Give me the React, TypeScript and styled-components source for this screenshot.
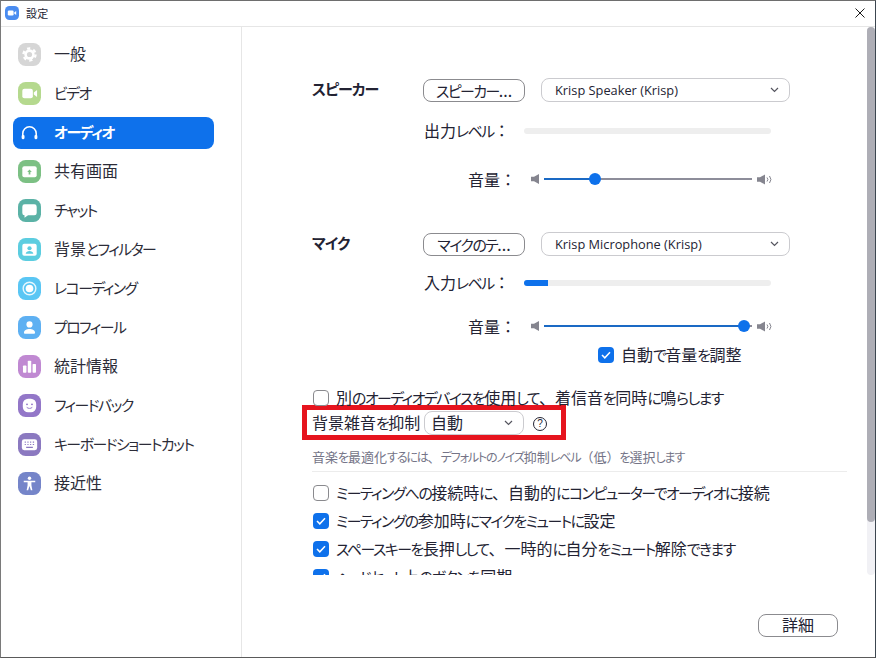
import React from "react";
import styled, { createGlobalStyle } from "styled-components";

const Global = createGlobalStyle`
  html, body { margin: 0; padding: 0; background: #fff; }
  * { box-sizing: border-box; }
  body {
    font-family: "Noto Sans CJK JP", "Noto Sans", sans-serif;
    color: #232333;
  }
`;

const Kana = styled.span`
  font-size: 0.93em;
  letter-spacing: -0.1em;
  font-feature-settings: "palt";
`;

const Jp = ({ children }: { children: string }) => (
  <>
    {children.split(/([\u3040-\u30FF]+)/).map((part, i) =>
      i % 2 === 1 ? <Kana key={i}>{part}</Kana> : part
    )}
  </>
);

const Window = styled.div`
  width: 876px;
  height: 658px;
  display: flex;
  flex-direction: column;
  background: #fff;
  border-top: 1px solid #6e6e6e;
  border-left: 1px solid #7a7a7a;
  border-right: 1px solid #3c4650;
  border-bottom: 1px solid #5a5a5a;
  overflow: hidden;
`;

const TitleBar = styled.div`
  height: 26px;
  flex: none;
  display: flex;
  align-items: center;
  padding: 0 10px 2px 4px;
  border-bottom: 1px solid #e6e6e6;
`;

const TitleText = styled.span`
  font-size: 11px;
  margin-left: 7px;
  flex: 1;
  letter-spacing: 0.3px;
`;

const Body = styled.div`
  flex: 1;
  display: flex;
  min-height: 0;
`;

const Sidebar = styled.nav`
  width: 241px;
  flex: none;
  border-right: 1px solid #e6e6e6;
  padding: 12px 0 0 12px;
  display: flex;
  flex-direction: column;
  gap: 7px;
`;

const NavItem = styled.div<{ $active?: boolean }>`
  width: 201px;
  height: 32px;
  border-radius: 8px;
  display: flex;
  align-items: center;
  gap: 13px;
  padding-left: 5px;
  background: ${(p) => (p.$active ? "#0e71eb" : "transparent")};
  color: ${(p) => (p.$active ? "#fff" : "#2c2c38")};
  font-size: 16px;
  font-weight: ${(p) => (p.$active ? 700 : 400)};
  white-space: nowrap;
`;

const NavLabel = styled.span`
  padding-bottom: 5px;
`;

const NavIcon = styled.svg`
  flex: none;
  margin-top: -1px;
`;

const Main = styled.main`
  flex: 1;
  display: flex;
  flex-direction: column;
  min-width: 0;
`;

const MainTop = styled.div`
  height: 548px;
  flex: none;
  display: flex;
`;

const ScrollArea = styled.div`
  flex: 1;
  overflow: hidden;
  padding: 51px 0 0 70px;
  font-size: 16px;
`;

const ScrollTrack = styled.div`
  width: 8px;
  flex: none;
  background: #f1f1f5;
  border-radius: 4px;
`;

const ScrollThumb = styled.div`
  height: 495px;
  background: #aeaeb6;
  border-radius: 4px;
`;

const Footer = styled.div`
  flex: 1;
  display: flex;
  justify-content: flex-end;
  align-items: flex-start;
  padding: 39px 37px 0 0;
`;

const DeviceRow = styled.div<{ $top: number }>`
  display: flex;
  align-items: center;
  height: 24px;
  margin-top: ${(p) => p.$top}px;
`;

const SectionLabel = styled.span`
  width: 111px;
  font-size: 15px;
  font-weight: 700;
  letter-spacing: -1px;
  font-feature-settings: "palt";
  padding-bottom: 3px;
`;

const TestButton = styled.button`
  width: 102px;
  height: 23px;
  margin-right: 16px;
  border: 1px solid #8b8b8f;
  border-radius: 8px;
  background: #fff;
  color: inherit;
  font: inherit;
  font-size: 16px;
  line-height: 20px;
  padding: 0;
`;

const SelectBox = styled.div<{ $w: number; $h: number; $inset: number }>`
  width: ${(p) => p.$w}px;
  height: ${(p) => p.$h}px;
  display: flex;
  align-items: center;
  justify-content: space-between;
  padding: 0 10px 0 ${(p) => p.$inset}px;
  border: 1px solid #cbcbcf;
  border-radius: 8px;
  background: #fff;
`;

const SelectValue = styled.span`
  font-family: "Open Sans", "Noto Sans", sans-serif;
  font-size: 12.8px;
`;

const NoiseValue = styled.span`
  font-size: 16px;
  padding-bottom: 2px;
`;

const LevelRow = styled.div<{ $top: number }>`
  display: flex;
  align-items: center;
  height: 24px;
  margin-top: ${(p) => p.$top}px;
  padding-left: 112px;
`;

const LevelLabel = styled.span`
  width: 100px;
  font-size: 16px;
  padding-bottom: 3px;
`;

const LevelTrack = styled.div`
  width: 247px;
  height: 6px;
  border-radius: 3px;
  background: #eeeeee;
  overflow: hidden;
`;

const LevelFill = styled.div<{ $w: number }>`
  width: ${(p) => p.$w}px;
  height: 100%;
  background: #0e71eb;
`;

const VolumeRow = styled.div<{ $top: number }>`
  display: flex;
  align-items: center;
  height: 24px;
  margin-top: ${(p) => p.$top}px;
  padding-left: 156px;
`;

const VolumeLabel = styled.span`
  width: 63px;
  font-size: 16px;
  margin-top: 1px;
  padding-bottom: 1px;
`;

const SliderTrack = styled.div<{ $rest: string }>`
  position: relative;
  width: 208px;
  height: 2px;
  margin: 0 5px 0 5px;
  background: ${(p) => p.$rest};
`;

const SliderFill = styled.div<{ $pct: number }>`
  height: 100%;
  width: ${(p) => p.$pct}%;
  background: #1a69c4;
`;

const SliderThumb = styled.div<{ $pct: number }>`
  position: absolute;
  top: -5px;
  left: ${(p) => p.$pct}%;
  width: 12px;
  height: 12px;
  margin-left: -6px;
  border-radius: 50%;
  background: #0e71eb;
`;

const CheckRow = styled.div<{ $top: number; $left?: number }>`
  display: flex;
  align-items: center;
  gap: 7px;
  height: 16px;
  margin-top: ${(p) => p.$top}px;
  padding-left: ${(p) => p.$left ?? 1}px;
  font-size: 16px;
  line-height: 16px;
  white-space: nowrap;
`;

const CheckText = styled.span`
  padding-bottom: 1px;
`;

const CheckBox = styled.span<{ $on?: boolean }>`
  width: 16px;
  height: 16px;
  flex: none;
  display: inline-flex;
  align-items: center;
  justify-content: center;
  border-radius: 4px;
  background: ${(p) => (p.$on ? "#0e71eb" : "#fff")};
  border: ${(p) => (p.$on ? "none" : "1px solid #8a8a8e")};
`;

const NoiseRow = styled.div`
  width: 264px;
  height: 35px;
  margin: -1px 0 0 -10px;
  padding-left: 5px;
  border: 5px solid #e6141e;
  display: flex;
  align-items: center;
  font-size: 16px;
  white-space: nowrap;
`;

const NoiseLabel = styled.span`
  width: 112px;
  flex: none;
  padding-bottom: 2px;
`;

const HelpMark = styled.span`
  width: 14px;
  height: 14px;
  margin: 2px 0 0 9px;
  flex: none;
  display: inline-flex;
  align-items: center;
  justify-content: center;
  border: 1.4px solid #232333;
  border-radius: 50%;
  font-family: "Liberation Sans", sans-serif;
  font-size: 10px;
  line-height: 1;
`;

const Hint = styled.div`
  margin-top: 9px;
  height: 16px;
  font-size: 13px;
  line-height: 16px;
  color: #747487;
  white-space: nowrap;
`;

const Divider = styled.hr`
  width: 535px;
  height: 1px;
  margin: 6px 0 0 0;
  border: none;
  background: #ececec;
`;

const DetailButton = styled.button`
  width: 80px;
  height: 23px;
  border: 1px solid #8b8b8f;
  border-radius: 8px;
  background: #fff;
  color: inherit;
  font: inherit;
  font-size: 16px;
  line-height: 18px;
  padding: 0 0 4px;
`;

const Squircle = ({ color, children }: { color: string; children: React.ReactNode }) => (
  <NavIcon width="23" height="23" viewBox="0 0 24 24">
    <rect width="24" height="24" rx="8" fill={color} />
    {children}
  </NavIcon>
);

type Item = { label: string; color?: string; icon: (c: string) => React.ReactNode; active?: boolean };

const items: Item[] = [
  {
    label: "一般",
    color: "#d6d6d6",
    icon: (c) => (
      <>
        <circle cx="12" cy="12" r="5.4" fill="#fff" />
        <circle cx="12" cy="12" r="6.3" fill="none" stroke="#fff" strokeWidth="2.4" strokeDasharray="3.3 3.3" />
        <circle cx="12" cy="12" r="2.7" fill={c} />
      </>
    ),
  },
  {
    label: "ビデオ",
    color: "#b5d98e",
    icon: () => (
      <>
        <rect x="4.5" y="7" width="11" height="10" rx="2.2" fill="#fff" />
        <path d="M16.5 11l3.4-2.6v7.2L16.5 13z" fill="#fff" />
      </>
    ),
  },
  { label: "オーディオ", active: true, icon: () => null },
  {
    label: "共有画面",
    color: "#7cc084",
    icon: (c) => (
      <>
        <rect x="4.5" y="6.5" width="15" height="11.5" rx="2" fill="#fff" />
        <path d="M12 9.8l2.4 2.6h-1.5v2.6h-1.8v-2.6H9.6z" fill={c} />
      </>
    ),
  },
  {
    label: "チャット",
    color: "#5bb2a6",
    icon: () => <path d="M7 5.5h10a2.5 2.5 0 0 1 2.5 2.5v6.5a2.5 2.5 0 0 1-2.5 2.5h-6.5l-3.7 2.6V17A2.5 2.5 0 0 1 4.5 14.5V8A2.5 2.5 0 0 1 7 5.5z" fill="#fff" />,
  },
  {
    label: "背景とフィルター",
    color: "#5ccde0",
    icon: (c) => (
      <>
        <rect x="4.5" y="6" width="15" height="12.5" rx="2" fill="#fff" />
        <circle cx="12" cy="10.7" r="2.2" fill={c} />
        <path d="M8 16.5c.3-2 2-3 4-3s3.7 1 4 3z" fill={c} />
      </>
    ),
  },
  {
    label: "レコーディング",
    color: "#5ac6f4",
    icon: () => (
      <>
        <circle cx="12" cy="12" r="6.6" fill="none" stroke="#fff" strokeWidth="1.5" opacity="0.85" />
        <circle cx="12" cy="12" r="4" fill="#fff" />
      </>
    ),
  },
  {
    label: "プロフィール",
    color: "#5eb0f2",
    icon: () => (
      <>
        <circle cx="12" cy="8.8" r="3.2" fill="#fff" />
        <path d="M6.2 17.6c0-2.8 2.8-4 5.8-4s5.8 1.2 5.8 4c0 .6-.4 1-1 1H7.2c-.6 0-1-.4-1-1z" fill="#fff" />
      </>
    ),
  },
  {
    label: "統計情報",
    color: "#c089d2",
    icon: () => (
      <>
        <rect x="5.2" y="11" width="3.6" height="7.5" rx="0.8" fill="#fff" />
        <rect x="10.2" y="6" width="3.6" height="12.5" rx="0.8" fill="#fff" />
        <rect x="15.2" y="9.5" width="3.6" height="9" rx="0.8" fill="#fff" />
      </>
    ),
  },
  {
    label: "フィードバック",
    color: "#9377c8",
    icon: (c) => (
      <>
        <rect x="5" y="5" width="14" height="14" rx="5.5" fill="#fff" />
        <circle cx="9.4" cy="10.8" r="1" fill={c} />
        <circle cx="14.6" cy="10.8" r="1" fill={c} />
        <path d="M9.4 14.2c1.4 1.2 3.8 1.2 5.2 0" fill="none" stroke={c} strokeWidth="1" strokeLinecap="round" />
      </>
    ),
  },
  {
    label: "キーボードショートカット",
    color: "#8b79c0",
    icon: (c) => (
      <>
        <rect x="4" y="6.5" width="16" height="11.5" rx="2.5" fill="#fff" />
        <path d="M7 9.5h1.2M9.8 9.5H11M12.6 9.5h1.2M15.4 9.5h1.4M7 12h1.2M9.8 12H11M12.6 12h1.2M15.4 12h1.4M8.5 15h7" stroke={c} strokeWidth="1.2" />
      </>
    ),
  },
  {
    label: "接近性",
    color: "#7585c9",
    icon: () => (
      <>
        <circle cx="12" cy="6.6" r="1.8" fill="#fff" />
        <path d="M6 9.2h12v1.5h-4v3l1 5.3h-1.6L12 14.6 10.6 19H9l1-5.3v-3H6z" fill="#fff" />
      </>
    ),
  },
];

const Headphones = () => (
  <NavIcon width="23" height="23" viewBox="0 0 24 24">
    <path d="M5 18v-5a7 7 0 0 1 14 0v5" fill="none" stroke="#fff" strokeWidth="1.6" />
    <rect x="3.8" y="14.5" width="3" height="4.5" rx="1.2" fill="#fff" />
    <rect x="17.2" y="14.5" width="3" height="4.5" rx="1.2" fill="#fff" />
  </NavIcon>
);

const Logo = () => (
  <svg width="14" height="14" viewBox="0 0 14 14" style={{ flex: "none" }}>
    <rect width="14" height="14" rx="4.5" fill="#4a8cf0" />
    <rect x="2.8" y="4.5" width="5.8" height="5" rx="1.2" fill="#fff" />
    <path d="M9.2 6.5l2-1.400v3.800l-2-1.400z" fill="#fff" />
  </svg>
);

const CloseIcon = () => (
  <svg width="10" height="10" viewBox="0 0 10 10" style={{ flex: "none" }}>
    <path d="M.5.5l9 9M9.5.5l-9 9" stroke="#1a1a1a" strokeWidth="1" />
  </svg>
);

const Chevron = () => (
  <svg width="9" height="6" viewBox="0 0 9 6" style={{ flex: "none" }}>
    <path d="M1 1l3.5 3.5L8 1" fill="none" stroke="#55555f" strokeWidth="1.2" />
  </svg>
);

const Tick = () => (
  <svg width="10" height="8" viewBox="0 0 10 8">
    <path d="M1 4l2.8 2.8L9 1.2" fill="none" stroke="#fff" strokeWidth="1.5" />
  </svg>
);

const SpeakerLow = () => (
  <svg width="8" height="10" viewBox="0 0 8 10" style={{ flex: "none" }}>
    <path d="M0 2.8h3L8 0v10L3 7.2H0z" fill="#85858f" />
  </svg>
);

const SpeakerHigh = () => (
  <svg width="15" height="11" viewBox="0 0 15 11" style={{ flex: "none" }}>
    <path d="M0 3.3h3L8 .5v10L3 7.7H0z" fill="#85858f" />
    <path d="M10 3.5a3 3 0 0 1 0 4M12.5 2a5.500 5.500 0 0 1 0 7" fill="none" stroke="#85858f" strokeWidth="1" />
  </svg>
);

const Volume = ({ top, pct, rest }: { top: number; pct: number; rest: string }) => (
  <VolumeRow $top={top}>
    <VolumeLabel>音量：</VolumeLabel>
    <SpeakerLow />
    <SliderTrack $rest={rest}>
      <SliderFill $pct={pct} />
      <SliderThumb $pct={pct} />
    </SliderTrack>
    <SpeakerHigh />
  </VolumeRow>
);

export default function App() {
  return (
    <>
      <Global />
      <Window>
        <TitleBar>
          <Logo />
          <TitleText>設定</TitleText>
          <CloseIcon />
        </TitleBar>
        <Body>
          <Sidebar>
            {items.map((it) => (
              <NavItem key={it.label} $active={it.active}>
                {it.active ? <Headphones /> : <Squircle color={it.color!}>{it.icon(it.color!)}</Squircle>}
                <NavLabel>
                  <Jp>{it.label}</Jp>
                </NavLabel>
              </NavItem>
            ))}
          </Sidebar>
          <Main>
            <MainTop>
              <ScrollArea>
                <DeviceRow $top={0}>
                  <SectionLabel>スピーカー</SectionLabel>
                  <TestButton>
                    <Jp>スピーカー...</Jp>
                  </TestButton>
                  <SelectBox $w={249} $h={24} $inset={13}>
                    <SelectValue>Krisp Speaker (Krisp)</SelectValue>
                    <Chevron />
                  </SelectBox>
                </DeviceRow>
                <LevelRow $top={17}>
                  <LevelLabel>
                    <Jp>出力レベル：</Jp>
                  </LevelLabel>
                  <LevelTrack />
                </LevelRow>
                <Volume top={24} pct={24.5} rest="#8d8d9a" />
                <DeviceRow $top={41}>
                  <SectionLabel>マイク</SectionLabel>
                  <TestButton>
                    <Jp>マイクのテ...</Jp>
                  </TestButton>
                  <SelectBox $w={249} $h={24} $inset={13}>
                    <SelectValue>Krisp Microphone (Krisp)</SelectValue>
                    <Chevron />
                  </SelectBox>
                </DeviceRow>
                <LevelRow $top={15}>
                  <LevelLabel>
                    <Jp>入力レベル：</Jp>
                  </LevelLabel>
                  <LevelTrack>
                    <LevelFill $w={24} />
                  </LevelTrack>
                </LevelRow>
                <Volume top={19} pct={96.2} rest="#8d8d9a" />
                <CheckRow $top={9} $left={286}>
                  <CheckBox $on>
                    <Tick />
                  </CheckBox>
                  <CheckText>
                    <Jp>自動で音量を調整</Jp>
                  </CheckText>
                </CheckRow>
                <CheckRow $top={27}>
                  <CheckBox />
                  <CheckText>
                    <Jp>別のオーディオデバイスを使用して、着信音を同時に鳴らします</Jp>
                  </CheckText>
                </CheckRow>
                <NoiseRow>
                  <NoiseLabel>
                    <Jp>背景雑音を抑制</Jp>
                  </NoiseLabel>
                  <SelectBox $w={100} $h={24} $inset={6}>
                    <NoiseValue>自動</NoiseValue>
                    <Chevron />
                  </SelectBox>
                  <HelpMark>?</HelpMark>
                </NoiseRow>
                <Hint>
                  <Jp>音楽を最適化するには、デフォルトのノイズ抑制レベル（低）を選択します</Jp>
                </Hint>
                <Divider />
                <CheckRow $top={13}>
                  <CheckBox />
                  <CheckText>
                    <Jp>ミーティングへの接続時に、自動的にコンピューターでオーディオに接続</Jp>
                  </CheckText>
                </CheckRow>
                <CheckRow $top={12}>
                  <CheckBox $on>
                    <Tick />
                  </CheckBox>
                  <CheckText>
                    <Jp>ミーティングの参加時にマイクをミュートに設定</Jp>
                  </CheckText>
                </CheckRow>
                <CheckRow $top={12}>
                  <CheckBox $on>
                    <Tick />
                  </CheckBox>
                  <CheckText>
                    <Jp>スペースキーを長押しして、一時的に自分をミュート解除できます</Jp>
                  </CheckText>
                </CheckRow>
                <CheckRow $top={12}>
                  <CheckBox $on>
                    <Tick />
                  </CheckBox>
                  <CheckText>
                    <Jp>ヘッドセット上のボタンを同期</Jp>
                  </CheckText>
                </CheckRow>
              </ScrollArea>
              <ScrollTrack>
                <ScrollThumb />
              </ScrollTrack>
            </MainTop>
            <Footer>
              <DetailButton>詳細</DetailButton>
            </Footer>
          </Main>
        </Body>
      </Window>
    </>
  );
}
